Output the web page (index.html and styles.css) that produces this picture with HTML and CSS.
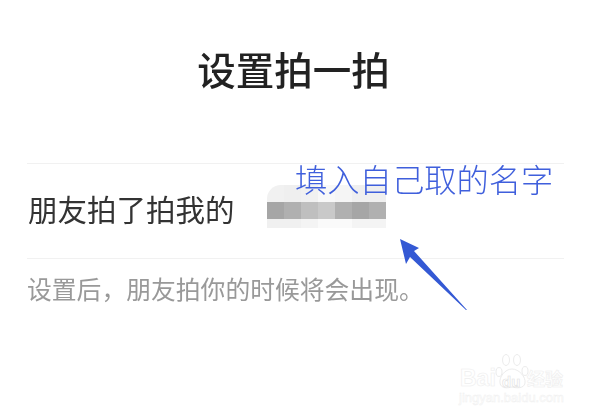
FILE: index.html
```html
<!DOCTYPE html>
<html lang="zh-CN">
<head>
<meta charset="utf-8">
<title>设置拍一拍</title>
<link rel="stylesheet" href="styles.css">
</head>
<body>
<main class="page">
  <h1 class="title">设置拍一拍</h1>
  <section class="group">
    <div class="row">
      <span class="label">朋友拍了拍我的</span>
      <div class="mosaic">
        <i class="c t0"></i><i class="c t1"></i><i class="c t2"></i><i class="c t3"></i><i class="c t4"></i><i class="c t5"></i><i class="c t5"></i>
        <i class="c m1"></i><i class="c m2"></i><i class="c m3"></i><i class="c m4"></i><i class="c m2"></i><i class="c m1"></i><i class="c m2"></i>
        <i class="c b1"></i><i class="c b1"></i><i class="c b2"></i><i class="c b3"></i><i class="c b3"></i><i class="c b2"></i><i class="c b2"></i>
      </div>
    </div>
    <p class="hint">设置后，朋友拍你的时候将会出现。</p>
  </section>
  <div class="note">填入自己取的名字</div>
  <svg class="arrow" width="72" height="76" viewBox="0 0 72 76"><path d="M1 1 L20 10 L15 13 L68 72 L67 72 L11 19 L7 26 Z" fill="#3459d4"/></svg>
  <div class="mark">
    <span class="mark-bai">Bai</span>
    <svg class="paw" width="34" height="36" viewBox="0 0 34 36" fill="none" stroke="#ececec" stroke-width="1"><ellipse cx="4" cy="19" rx="3" ry="4.500"/><ellipse cx="11" cy="7" rx="3.500" ry="5.500"/><ellipse cx="22" cy="7" rx="3.500" ry="5.500"/><ellipse cx="30" cy="18" rx="3" ry="4.500"/><path d="M17 16 C10 16 4 24 5 30 C6 36 13 35 17 34 C21 35 29 36 30 30 C31 24 24 16 17 16 Z"/></svg>
    <span class="mark-du">du</span>
    <span class="mark-cn">经验</span>
    <span class="mark-url">jingyan.baidu.com</span>
  </div>
</main>
</body>
</html>
```
FILE: styles.css
```css
* { box-sizing: border-box; margin: 0; padding: 0; }
html, body { background: #fff; }
body { font-family: "Noto Sans CJK SC", "Liberation Sans", sans-serif; }
.page { position: relative; width: 599px; height: 418px; overflow: hidden; padding: 44px 35px 0 27px; }
.title { font-size: 38.500px; line-height: 48px; font-weight: 500; color: #222; text-align: center; padding-right: 4px; filter: blur(0.3px); }
.group { margin-top: 71px; }
.row { display: flex; align-items: center; height: 96px; border-top: 1px solid #f1f1f1; border-bottom: 1px solid #f1f1f1; }
.label { font-size: 29.500px; line-height: 40px; color: #333; padding-left: 1px; width: 240px; margin-bottom: 6px; filter: blur(0.4px); }
.mosaic { display: grid; grid-template-columns: repeat(7, 17px); grid-template-rows: 17px 17px 9px; margin-bottom: 10px; }
.c { display: block; }
.t0 { background: #f1f1f1; border-top-left-radius: 14px; }
.t1 { background: #efefef; } .t2 { background: #f1f1f1; } .t3 { background: #f8f8f8; }
.t4 { background: #f5f5f5; } .t5 { background: #efefef; }
.m1 { background: #a6a6a6; } .m2 { background: #b0b0b0; } .m3 { background: #bfbfbf; } .m4 { background: #c9c9c9; }
.b1 { background: #f0f0f0; } .b2 { background: #f4f4f4; } .b3 { background: #fafafa; }
.hint { margin-top: 12px; font-size: 24.800px; line-height: 34px; color: #999; filter: blur(0.4px); }
.note { position: absolute; left: 295px; top: 156px; font-size: 32.300px; line-height: 44px; font-weight: 300; color: #3f5fdc; white-space: nowrap; filter: blur(0.3px); }
.arrow { position: absolute; left: 399px; top: 238px; }
.mark { position: absolute; left: 458px; top: 352px; width: 138px; height: 56px; color: transparent; font-family: "Liberation Sans", sans-serif; -webkit-text-stroke: 0.6px #eeeeee; }
.mark span { position: absolute; white-space: nowrap; line-height: 1; }
.mark-bai { left: 2px; top: 15px; font-size: 23px; font-weight: 700; }
.paw { position: absolute; left: 37px; top: 1px; }
.mark-du { left: 44px; top: 22px; font-size: 15px; font-weight: 700; -webkit-text-stroke: 0.6px #e2e2e2; }
.mark-cn { left: 69px; top: 17px; font-family: "Noto Sans CJK SC", sans-serif; font-size: 18px; font-weight: 700; }
.mark-url { left: 1px; top: 39px; font-size: 13px; -webkit-text-stroke: 0.5px #f0f0f0; }
```
